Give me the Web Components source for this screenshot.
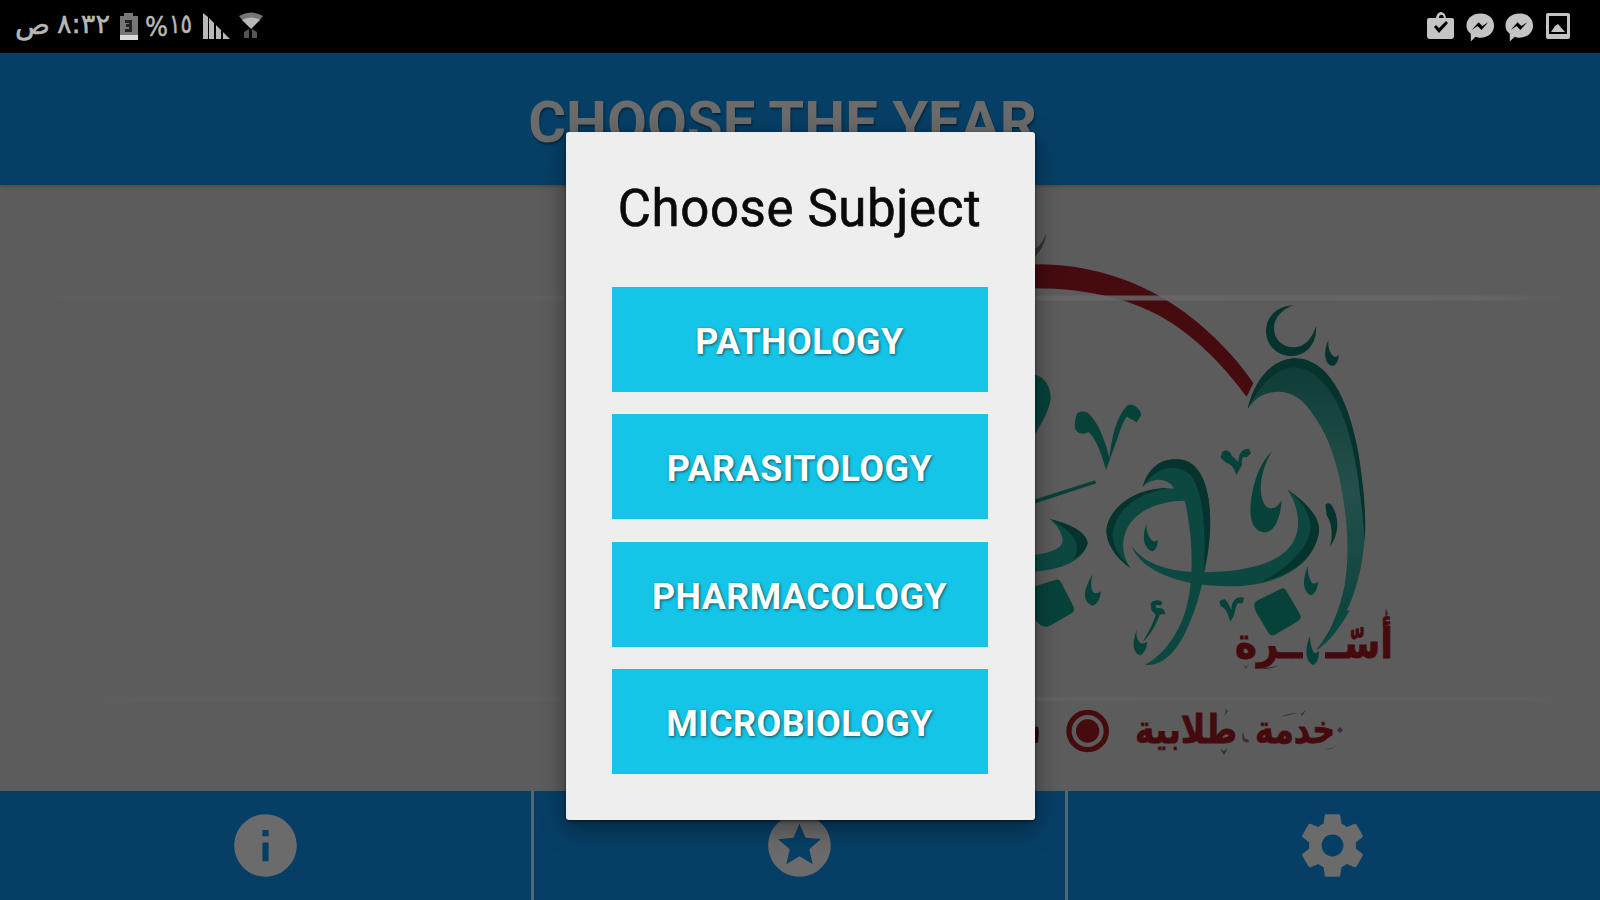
<!DOCTYPE html>
<html lang="en">
<head>
<meta charset="utf-8">
<title>Choose Subject</title>
<style>
  body {
    margin: 0;
    width: 1600px;
    height: 900px;
    overflow: hidden;
    display: flex;
    flex-direction: column;
    background: #5c5c5c;
    font-family: Roboto, "Liberation Sans", sans-serif;
  }
</style>
</head>
<body>
  <status-bar></status-bar>
  <app-header>CHOOSE THE YEAR</app-header>
  <logo-panel></logo-panel>
  <nav-bar>
    <nav-item icon="info"></nav-item>
    <nav-item icon="star"></nav-item>
    <nav-item icon="gear"></nav-item>
  </nav-bar>
  <subject-dialog>
    <span slot="title">Choose Subject</span>
    <subject-button>PATHOLOGY</subject-button>
    <subject-button>PARASITOLOGY</subject-button>
    <subject-button>PHARMACOLOGY</subject-button>
    <subject-button>MICROBIOLOGY</subject-button>
  </subject-dialog>

<script>
class StatusBar extends HTMLElement {
  constructor() {
    super();
    this.attachShadow({ mode: 'open' });
    this.shadowRoot.innerHTML = `
      <style>
        :host {
          display: flex;
          justify-content: space-between;
          align-items: center;
          height: 53px;
          box-sizing: border-box;
          padding: 0 27px 0 15px;
          background: #000;
          color: #b8b8b8;
          font-family: "DejaVu Sans", sans-serif;
        }
        div { display: flex; align-items: center; height: 53px; }
        svg { display: block; fill: currentColor; }
        text { font-size: 27px; stroke: currentColor; stroke-width: 0.5px; }
        .right { gap: 9px; color: #c4c4c4; }
      </style>
      <div class="left">
        <svg width="255" height="53" viewBox="15 0 255 53">
          <text x="15" y="34" textLength="35" lengthAdjust="spacingAndGlyphs">ص</text>
          <text x="57" y="33" textLength="53" lengthAdjust="spacingAndGlyphs">٨:٣٢</text>
          <path fill="#777" d="M124 13h9v3h5v24h-18V16h4z"/>
          <path fill="#222" d="M125 20h7v12h-7v-3h4v-2h-3v-3h3v-1h-4z"/>
          <path fill="#d8d8d8" d="M120 35h18v5h-18z"/>
          <text x="145" y="36" textLength="23" lengthAdjust="spacingAndGlyphs">%</text>
          <text x="169" y="33" textLength="23" lengthAdjust="spacingAndGlyphs">١٥</text>
          <path d="M203 13l5 4v22h-5zM209 18l5 5v16h-5zM216 25l5 5v9h-5zM223 32l7 7h-7z"/>
          <path fill="#777" d="M239 16q12-7 24 0l-4 5q-8-5-16 0z"/>
          <path d="M242 20q9-5 18 0l-9 9z"/>
          <path fill="#555" d="M244 32l5-3v9h-5zM252 29l5 3v6h-5z"/>
        </svg>
      </div>
      <div class="right">
        <svg width="30" height="30" viewBox="0 0 30 30">
          <path fill-rule="evenodd" d="M3 6h7q1-6 5-6t5 6h6q2 0 2 2v16q0 3-3 3H4q-3 0-3-3V8q0-2 2-2zM13 6h5q-1-4-3-3-2 0-2 3zM8 15l5 6 9-10-2-2-7 7-3-3z"/>
        </svg>
        <svg width="30" height="30" viewBox="0 0 31 30">
          <path fill-rule="evenodd" d="M16 1c8 0 14 5 14 12.500S24 26 16 26c-2 0-3 0-5-1l-5 5v-8C3 20 1.500 17 1.500 13.500 1.500 6 8 1 16 1zM7 18l7-8 4 4 6-4-7 8-4-4z"/>
        </svg>
        <svg width="30" height="30" viewBox="0 0 31 30">
          <path fill-rule="evenodd" d="M16 1c8 0 14 5 14 12.500S24 26 16 26c-2 0-3 0-5-1l-5 5v-8C3 20 1.500 17 1.500 13.500 1.500 6 8 1 16 1zM7 18l7-8 4 4 6-4-7 8-4-4z"/>
        </svg>
        <svg width="30" height="30" viewBox="0 0 30 30">
          <path fill-rule="evenodd" d="M5 1h20q2 0 2 2v22q0 2-2 2H5q-2 0-2-2V3q0-2 2-2zM6 4v18h18V4zM8 20l4-6 3-2 7 8z"/>
        </svg>
      </div>
    `;
  }
}

class AppHeader extends HTMLElement {
  constructor() {
    super();
    this.attachShadow({ mode: 'open' });
    this.shadowRoot.innerHTML = `
      <style>
        :host {
          display: flex;
          justify-content: center;
          align-items: center;
          height: 132px;
          box-sizing: border-box;
          padding: 5px 35px 0 0;
          position: relative;
          background: #063f66;
          box-shadow: 0 1px 4px rgba(0, 0, 0, 0.25);
          color: #6b6b6b;
          font-size: 58px;
          font-weight: 700;
          text-shadow: 1px 2px 2px rgba(0, 0, 0, 0.4);
          white-space: nowrap;
        }
      </style>
      <slot></slot>
    `;
  }
}

class LogoPanel extends HTMLElement {
  constructor() {
    super();
    this.attachShadow({ mode: 'open' });
    this.shadowRoot.innerHTML = `
      <style>
        :host { display: block; height: 606px; background: #5c5c5c; }
        svg { display: block; }
        text {
          font-family: "DejaVu Sans", sans-serif;
          font-weight: 700;
          fill: #450a0e;
          stroke: #450a0e;
          stroke-width: 0.8px;
        }
        .teal { fill: #06423a; }
        .body { fill: #0c4840; }
        .dark { fill: #06332d; }
        .red { fill: #450b0f; }
        .tick { fill: #38302f; }
      </style>
      <svg width="1600" height="606" viewBox="0 185 1600 606">
        <defs>
          <linearGradient id="line">
            <stop offset="0" stop-color="#686868" stop-opacity="0"/>
            <stop offset=".07" stop-color="#686868" stop-opacity=".25"/>
            <stop offset=".5" stop-color="#686868" stop-opacity=".3"/>
            <stop offset=".68" stop-color="#686868" stop-opacity=".85"/>
            <stop offset=".94" stop-color="#686868" stop-opacity=".75"/>
            <stop offset="1" stop-color="#686868" stop-opacity="0"/>
          </linearGradient>
          <linearGradient id="alef" x1="0" y1="0" x2="0" y2="1">
            <stop offset="0" stop-color="#0d3b36"/>
            <stop offset=".45" stop-color="#25504a"/>
            <stop offset="1" stop-color="#07423a"/>
          </linearGradient>
        </defs>

        <!-- everything in this group is on a three times finer grid -->
        <g transform="translate(1020 220) scale(.33333)">
          <path class="tick" d="M78 40C76 68 66 86 46 110V85C60 80 70 62 78 40z"/>
          <path class="red" d="M40 133C190 130 330 175 430 235C540 300 640 400 700 490L680 530C620 450 540 360 440 300C350 245 220 205 40 205z"/>
          <path class="dark" d="M820 256C760 260 737 300 738 335C740 380 775 408 815 408C860 406 892 370 888 318C878 350 860 378 825 382C790 384 762 360 762 325C762 295 785 268 820 256z"/>
          <path class="dark" d="M925 360C910 395 912 430 935 438C950 438 955 420 957 405C950 412 944 412 940 408C928 400 924 380 925 360z"/>

          <!-- alef -->
          <path fill="url(#alef)" d="M683 567C700 490 750 418 825 415C920 415 985 530 1015 700C1028 780 1040 880 1034 960C1022 1090 985 1210 888 1290C940 1230 962 1150 973 1100C988 1010 985 920 965 810C952 730 925 650 890 600C850 530 810 515 770 515C730 518 705 535 683 567z"/>
          <path class="dark" d="M683 567C700 490 750 418 825 415C920 415 985 530 1015 700C1028 780 1040 880 1034 960C1026 850 1012 740 993 665C960 530 895 445 825 442C760 445 718 500 683 567z"/>

          <!-- marks over the letters -->
          <path class="teal" d="M40 463C75 470 92 500 92 535C88 570 70 600 50 635L40 645z"/>
          <path class="teal" d="M172 580C185 570 205 575 215 590C240 620 258 670 268 715C275 650 290 590 320 558C335 546 360 562 364 585L350 607L320 590C305 610 295 650 289 665L258 750C245 700 225 650 205 635C190 647 170 640 165 625C164 610 166 590 172 580z"/>
          <path class="teal" d="M606 697C618 687 630 692 634 706L656 727C654 700 668 685 686 686L693 700L680 712C666 705 664 720 666 735L649 765C642 740 630 730 618 728L602 713z"/>

          <!-- waw -->
          <path class="body" d="M368 800C385 745 420 715 475 718C545 722 575 810 570 930C562 1080 510 1250 450 1305C425 1328 400 1338 375 1334C420 1310 455 1270 485 1205C525 1110 522 960 494 842C410 842 330 880 314 945C304 980 310 1010 332 1045C280 1010 255 960 260 925C270 860 350 800 462 806C450 780 405 765 368 800z"/>
          <path class="dark" d="M368 800C385 745 420 715 475 718C545 722 575 810 570 930C568 980 560 1020 552 1050C556 950 555 825 512 765C460 724 405 745 368 800zM260 925C270 860 350 800 452 804C360 815 285 865 278 945C280 985 300 1012 332 1045C280 1010 255 960 260 925z"/>
          <path class="teal" d="M380 910C367 945 367 982 397 994C408 990 414 975 413 960C405 966 398 966 393 958C383 946 378 930 380 910z"/>

          <!-- beh -->
          <path class="body" d="M335 978C390 1060 530 1065 650 1050C760 1035 845 990 833 890C830 860 818 832 802 808C860 850 900 890 897 935C880 1050 750 1105 610 1098C480 1098 360 1050 335 978z"/>
          <path class="dark" d="M802 808C860 850 900 890 897 935C885 1010 825 1060 725 1085C810 1040 885 970 869 900C860 865 835 835 802 808z"/>
          <path class="teal" d="M757 693C720 750 710 830 740 860C758 872 775 860 785 840C782 890 765 940 730 937C694 930 686 890 694 835C703 775 723 725 757 693z"/>
          <path class="dark" d="M916 855C930 840 940 860 948 885C958 920 948 955 930 980C938 950 938 915 920 885z"/>
          <path class="teal" d="M702 1155Q704 1145 715 1140L783 1106Q793 1102 799 1112L841 1185Q845 1197 835 1203L765 1244Q753 1250 746 1240L708 1176z"/>
          <path class="teal" d="M864 1038C848 1075 846 1112 872 1126C886 1123 893 1105 895 1084C888 1092 879 1092 875 1088C865 1070 862 1055 864 1038z"/>
          <path class="teal" d="M598 1143L614 1137L624 1150L634 1170C635 1140 650 1128 672 1133L668 1150L652 1150C646 1165 644 1180 641 1188L631 1205C624 1180 618 1165 602 1158z"/>

          <!-- letters running out from under the dialog -->
          <path class="teal" d="M40 840L225 781L229 790L40 852z"/>
          <path class="body" d="M90 898C145 910 200 935 203 970C190 1025 120 1050 40 1055V1005C90 1000 135 985 127 955C121 930 110 915 90 898z"/>
          <path class="dark" d="M90 898C145 910 200 935 203 970C198 990 180 1006 160 1018C187 980 165 935 90 898z"/>
          <path class="teal" d="M40 1100L108 1079Q118 1077 123 1087L161 1160Q165 1172 155 1180L88 1218Q76 1223 62 1216L40 1195z"/>
          <path class="teal" d="M219 1062C190 1105 185 1145 217 1157C232 1153 243 1135 242 1113C235 1120 225 1122 220 1117C211 1105 212 1080 219 1062z"/>

          <!-- hamza and hook -->
          <path class="teal" d="M392 1150C402 1138 424 1138 428 1150L420 1157C408 1150 404 1160 410 1165C425 1160 436 1170 436 1182C425 1185 420 1180 417 1190C405 1220 388 1248 368 1266C384 1238 398 1215 407 1184L394 1170z"/>
          <path class="teal" d="M350 1230C335 1270 338 1300 362 1306C374 1298 382 1280 381 1265C372 1272 362 1272 358 1266C350 1256 348 1245 350 1230z"/>

          <!-- seal -->
          <circle cx="203" cy="1533" r="56" fill="none" stroke="#450b0f" stroke-width="16"/>
          <circle cx="203" cy="1533" r="35" class="red"/>
          <path fill="#240c0d" d="M40 1520h14q5 12 0 48H40z"/>
        </g>

        <text x="1235" y="658" font-size="42" textLength="158" lengthAdjust="spacingAndGlyphs">أسّـــــرة</text>
        <path fill="#5c5c5c" d="M1303 648h22v12h-22z"/>
        <path class="teal" d="M1310 636c-6 14-4 26 3 29 5-2 6-8 6-14-3 3-5 2-6 0-2-5-3-9-3-15z"/>
        <path class="body" d="M1341 612c-8 18-17 29-25 38l4-2c9-7 20-20 30-38z"/>
        <path class="tick" d="M1386 608l2 6-2 4-1-4zM1243 664l3 3 3-3-3 5zM1258 669q10-1 22-4-10 5-22 4z"/>
        <text x="1255" y="743" font-size="39" textLength="80" lengthAdjust="spacingAndGlyphs">خدمة</text>
        <text x="1135" y="743" font-size="39" textLength="102" lengthAdjust="spacingAndGlyphs">طلابية</text>
        <path class="tick" d="M1243 732c-2 6 0 12 6 10l-1-3c-3 1-4-2-5-7z"/>
        <path class="tick" d="M1337 730l3-3 3 3-3 3zM1298 709l3 5 5-4-4 6zM1280 717q9-4 18-4-9 2-18 4zM1225 708l3 3-4 5 2-5zM1220 749l4 6 4-7-4 3zM1325 749q8 0 12-4-4 5-12 4z"/>

        <rect x="30" y="295.500" width="1540" height="5" fill="url(#line)"/>
        <rect x="30" y="697" width="1540" height="4" fill="url(#line)" opacity=".5"/>
      </svg>
    `;
  }
}

class NavBar extends HTMLElement {
  constructor() {
    super();
    this.attachShadow({ mode: 'open' });
    this.shadowRoot.innerHTML = `
      <style>
        :host {
          display: grid;
          grid-template-columns: repeat(3, 1fr);
          height: 109px;
          background: #063f66;
        }
        ::slotted(nav-item:not(:first-child)) {
          border-left: 3px solid #526778;
          margin-left: -2px;
        }
      </style>
      <slot></slot>
    `;
  }
}

const NAV_ICONS = {
  info: 'M12 2C6.480 2 2 6.480 2 12s4.480 10 10 10 10-4.480 10-10S17.520 2 12 2zm1 15h-2v-6h2v6zm0-8h-2V7h2v2z',
  star: 'M12 2C6.480 2 2 6.480 2 12s4.480 10 10 10 10-4.480 10-10S17.520 2 12 2zm4.240 16L12 15.450 7.770 18l1.120-4.810-3.730-3.230 4.920-.42L12 5l1.920 4.530 4.920.42-3.730 3.230L16.230 18z',
  gear: 'M19.430 12.980c.04-.32.07-.64.07-.98s-.03-.66-.07-.98l2.110-1.650c.19-.15.24-.42.12-.64l-2-3.460c-.12-.22-.39-.3-.61-.22l-2.490 1c-.52-.4-1.080-.73-1.690-.98l-.38-2.650C14.460 2.180 14.250 2 14 2h-4c-.25 0-.46.18-.49.42l-.38 2.650c-.61.25-1.170.59-1.690.98l-2.490-1c-.23-.09-.49 0-.61.22l-2 3.460c-.13.22-.07.49.12.64l2.110 1.650c-.04.32-.07.65-.07.98s.03.66.07.98l-2.110 1.650c-.19.15-.24.42-.12.64l2 3.460c.12.22.39.3.61.22l2.490-1c.52.4 1.080.73 1.690.98l.38 2.650c.03.24.24.42.49.42h4c.25 0 .46-.18.49-.42l.38-2.650c.61-.25 1.170-.59 1.690-.98l2.490 1c.23.09.49 0 .61-.22l2-3.460c.12-.22.07-.49-.12-.64l-2.110-1.650zM12 15.500c-1.930 0-3.500-1.570-3.500-3.500s1.570-3.500 3.500-3.500 3.500 1.570 3.500 3.500-1.570 3.500-3.500 3.500z'
};

class NavItem extends HTMLElement {
  constructor() {
    super();
    this.attachShadow({ mode: 'open' });
  }

  connectedCallback() {
    this.shadowRoot.innerHTML = `
      <style>
        :host { display: flex; justify-content: center; align-items: center; padding-right: 2px; }
        svg { display: block; fill: #6b6b6b; }
      </style>
      <svg width="75" height="75" viewBox="0 0 24 24"><path d="${NAV_ICONS[this.getAttribute('icon')]}"/></svg>
    `;
  }
}

class SubjectDialog extends HTMLElement {
  constructor() {
    super();
    this.attachShadow({ mode: 'open' });
    this.shadowRoot.innerHTML = `
      <style>
        :host {
          position: absolute;
          inset: 52px 0 0 0;
          display: grid;
          place-items: center;
        }
        section {
          display: flex;
          flex-direction: column;
          width: 469px;
          height: 688px;
          box-sizing: border-box;
          padding: 0 47px 46px 46px;
          background: #eee;
          border-radius: 3px;
          box-shadow: 0 8px 26px rgba(0, 0, 0, 0.4), 0 1px 3px rgba(0, 0, 0, 0.6);
        }
        h1 {
          flex: 1;
          display: flex;
          justify-content: center;
          align-items: center;
          margin: 0;
          padding-bottom: 2px;
          font-size: 51px;
          font-weight: 400;
          letter-spacing: 0.6px;
          -webkit-text-stroke: 0.6px #0a0a0a;
          color: #0a0a0a;
          white-space: nowrap;
        }
        .list { display: flex; flex-direction: column; gap: 22.500px; }
      </style>
      <section>
        <h1><slot name="title"></slot></h1>
        <div class="list"><slot></slot></div>
      </section>
    `;
  }
}

class SubjectButton extends HTMLElement {
  constructor() {
    super();
    this.attachShadow({ mode: 'open' });
    this.shadowRoot.innerHTML = `
      <style>
        :host { display: block; }
        button {
          display: block;
          width: 100%;
          height: 105px;
          padding: 5px 0 0;
          border: none;
          background: #14c5e8;
          color: #fff;
          font: 700 36px Roboto, sans-serif;
          letter-spacing: 0.4px;
          text-shadow: 1px 1px 3px rgba(0, 0, 0, 0.6);
          cursor: pointer;
        }
      </style>
      <button><slot></slot></button>
    `;
  }
}

customElements.define('status-bar', StatusBar);
customElements.define('app-header', AppHeader);
customElements.define('logo-panel', LogoPanel);
customElements.define('nav-bar', NavBar);
customElements.define('nav-item', NavItem);
customElements.define('subject-dialog', SubjectDialog);
customElements.define('subject-button', SubjectButton);
</script>
</body>
</html>
